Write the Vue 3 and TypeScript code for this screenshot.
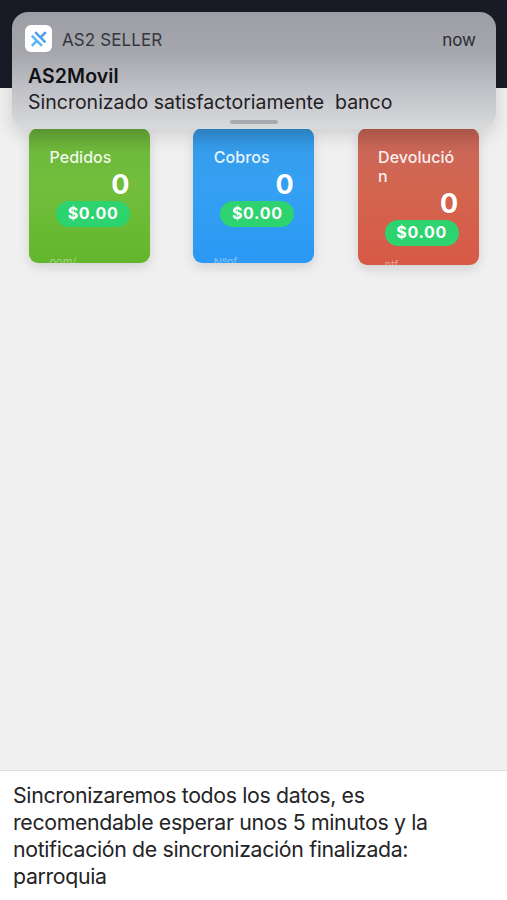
<script setup lang="ts">
interface Card {
  kind: string
  lines: string[]
  count: number
  amount: string
  note: string
}

const cards: Card[] = [
  { kind: 'orders', lines: ['Pedidos'], count: 0, amount: '$0.00', note: 'oom/' },
  { kind: 'payments', lines: ['Cobros'], count: 0, amount: '$0.00', note: 'Nºof' },
  { kind: 'returns', lines: ['Devolució', 'n'], count: 0, amount: '$0.00', note: '..ntf' },
]

const messageLines: string[] = [
  'Sincronizaremos todos los datos, es',
  'recomendable esperar unos 5 minutos y la',
  'notificación de sincronización finalizada:',
  'parroquia',
]
</script>

<template>
  <div class="screen">
    <header class="topbar"></header>
    <main class="content">
      <section v-for="card in cards" :key="card.kind" class="card" :class="card.kind">
        <h2 class="title"><span v-for="line in card.lines" :key="line">{{ line }}</span></h2>
        <strong class="count">{{ card.count }}</strong>
        <span class="amount">{{ card.amount }}</span>
        <small class="note">{{ card.note }}</small>
      </section>
    </main>
    <footer class="message">
      <span v-for="line in messageLines" :key="line">{{ line }}</span>
    </footer>
    <aside class="banner">
      <div class="app">
        <span class="logo">
          <svg viewBox="0 0 27 27" width="27" height="27" fill="none" stroke-width="2.5">
            <path stroke="#4b9fe8" d="M10.2 7.2 20.4 17.4M15.6 12.4 20.8 7.2" />
            <path stroke="#5ab4f8" d="M6.8 10.6 17 20.8M12 15.6 6.8 20.8" />
          </svg>
        </span>
        <span class="app-name">AS2 SELLER</span>
        <time class="time">now</time>
      </div>
      <strong class="banner-title">AS2Movil</strong>
      <p class="banner-text">Sincronizado satisfactoriamente&nbsp; banco</p>
      <span class="grabber"></span>
    </aside>
  </div>
</template>

<style>
body { background: #f0f0f0; }
</style>

<style scoped>
.screen {
  position: relative;
  display: flex;
  flex-direction: column;
  height: 900px;
  overflow: hidden;
  background: #f0f0f0;
  font-family: Inter, "Liberation Sans", sans-serif;
}
.topbar { flex: 0 0 88px; background: #191b26; }
.content {
  flex: 1;
  display: flex;
  align-items: flex-start;
  gap: 43.3px;
  padding: 40px 0 0 29px;
}
.card {
  box-sizing: border-box;
  display: flex;
  flex: none;
  flex-direction: column;
  width: 121px;
  height: 135px;
  padding: 20px 20.5px 0;
  border-radius: 9px;
  overflow: hidden;
  color: #fff;
  box-shadow: 0 4px 12px rgba(0, 0, 0, 0.13);
}
.orders { background: linear-gradient(#64a637, #6eb93b 18%, #72be3c 45%, #62b62c); }
.payments { background: linear-gradient(#318fd6, #359dec 18%, #35a0f3 45%, #2a99f4); }
.returns { height: 137px; background: linear-gradient(#bd6051, #cc6757 18%, #d3654f 45%, #d75946); }
.title {
  display: flex;
  flex-direction: column;
  margin: 0;
  font-size: 16px;
  font-weight: 500;
  line-height: 19px;
  letter-spacing: 0.05px;
  white-space: nowrap;
  color: rgba(255, 255, 255, 0.92);
}
.count {
  align-self: flex-end;
  font-size: 27px;
  font-weight: 700;
  line-height: 36px;
  height: 34px;
}
.amount {
  align-self: flex-end;
  flex: 0 0 26px;
  width: 74px;
  margin-right: -0.5px;
  border-radius: 13px;
  background: #2dd36f;
  font-size: 16px;
  font-weight: 700;
  line-height: 25px;
  letter-spacing: 0.7px;
  text-align: center;
}
.note {
  margin-top: 28px;
  font-size: 11px;
  line-height: 15px;
  color: rgba(255, 255, 255, 0.42);
}
.returns .note { margin-top: 12px; }
.message {
  box-sizing: border-box;
  display: flex;
  flex-direction: column;
  flex: 0 0 130px;
  padding: 11px 13px 0;
  border-top: 1px solid #dedede;
  background: #fff;
  color: #242426;
  font-size: 21.3px;
  line-height: 27px;
  letter-spacing: -0.34px;
  white-space: nowrap;
}
.banner {
  position: absolute;
  top: 12px;
  left: 12px;
  box-sizing: border-box;
  display: flex;
  flex-direction: column;
  width: 484px;
  height: 117px;
  padding: 13px 20px 0 16px;
  border-radius: 16px;
  background: linear-gradient(#9d9ea5 0%, #a6a7ad 35%, #c2c3c8 68%, #d9dadc 100%);
  box-shadow: 0 6px 18px rgba(0, 0, 0, 0.15);
}
.app { display: flex; align-items: center; height: 27px; margin-left: -3px; }
.logo { width: 27px; height: 27px; border-radius: 6px; background: #fff; }
.logo svg { display: block; }
.app-name { margin: 2px 0 0 10px; font-size: 17px; letter-spacing: 0.1px; color: #343640; }
.time { margin: 2px 0 0 auto; font-size: 17px; color: #292b31; }
.banner-title { margin-top: 11px; font-size: 19.5px; font-weight: 600; line-height: 26px; letter-spacing: 0.1px; color: #101114; }
.banner-text { margin: 0; font-size: 19.5px; line-height: 26px; white-space: nowrap; color: #1f2024; }
.grabber { align-self: center; width: 48px; height: 4px; margin: 5px 0 0 4px; border-radius: 2px; background: #aaabb0; }
</style>
